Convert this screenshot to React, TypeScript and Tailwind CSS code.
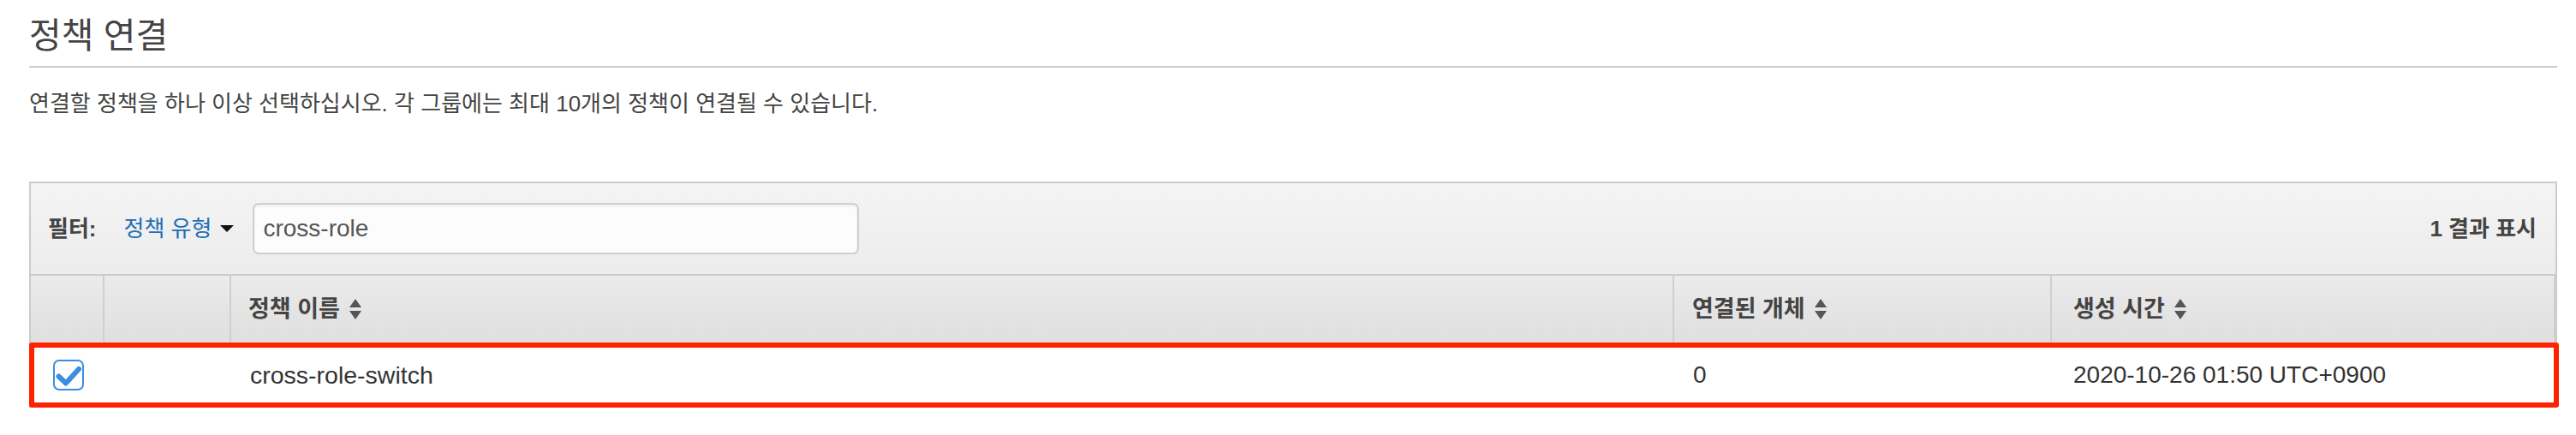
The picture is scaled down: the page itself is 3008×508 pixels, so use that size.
import React from "react";

const SANS = "font-['Liberation_Sans','Noto_Sans_CJK_KR',sans-serif]";

function SortIcon() {
  return (
    <svg width="16" height="26" viewBox="0 0 16 26" className="ml-[10px] shrink-0">
      <path d="M8 1 L15 11 L1 11 Z" fill="#555" />
      <path d="M1 15 L15 15 L8 25 Z" fill="#555" />
    </svg>
  );
}

function CheckBox() {
  return (
    <svg width="36" height="36" viewBox="0 0 36 36">
      <rect x="1" y="1" width="34" height="34" rx="6" fill="#fff" stroke="#3a8ee0" strokeWidth="2" />
      <polyline
        points="6.5,19.5 15,27.5 30,11"
        fill="none"
        stroke="#3a8ee0"
        strokeWidth="6"
        strokeLinecap="round"
        strokeLinejoin="round"
      />
    </svg>
  );
}

function HeaderCell({ label, className = "" }: { label?: string; className?: string }) {
  return (
    <div className={`flex items-center border-r-2 border-[#cfcfcf] ${className}`}>
      {label && (
        <>
          <span className="text-[27px] font-bold text-[#444]">{label}</span>
          <SortIcon />
        </>
      )}
    </div>
  );
}

export default function App() {
  return (
    <div className={`h-[508px] w-[3008px] overflow-hidden bg-white pl-[34px] pr-[22px] ${SANS}`}>
      <h2 className="pt-[18px] text-[41px] font-normal leading-[49px] text-[#444]">정책 연결</h2>
      <div className="mt-[10px] h-[2px] bg-[#cccccc]" />
      <p className="mt-[26px] text-[26px] leading-[32px] text-[#444]">
        연결할 정책을 하나 이상 선택하십시오. 각 그룹에는 최대 10개의 정책이 연결될 수 있습니다.
      </p>

      <div className="mt-[75px] border-x-2 border-t-2 border-[#cccccc]">
        {/* filter bar */}
        <div className="flex h-[108px] items-center border-b-2 border-[#cccccc] bg-gradient-to-b from-[#f4f4f4] to-[#ececec] pl-[20px] pr-[22px]">
          <span className="text-[26px] font-bold text-[#444]">필터:</span>
          <button type="button" className="ml-[32px] flex items-center text-[26px] text-[#1f6fb6]">
            정책 유형
            <span className="ml-[10px] h-0 w-0 border-x-[8px] border-t-[8px] border-x-transparent border-t-[#111]" />
          </button>
          <div className="ml-[22px] flex h-[60px] w-[708px] items-center rounded-[7px] border-2 border-[#cfcfcf] bg-[#fcfcfc] pl-[10px] shadow-[inset_0_2px_3px_rgba(0,0,0,0.06)]">
            <span className="text-[28px] text-[#555]">cross-role</span>
          </div>
          <span className="ml-auto text-[26px] font-bold text-[#444]">1 결과 표시</span>
        </div>

        {/* header */}
        <div className="grid h-[78px] grid-cols-[86px_148px_1685px_441px_1fr] bg-gradient-to-b from-[#ebebeb] to-[#dfdfdf]">
          <HeaderCell />
          <HeaderCell />
          <HeaderCell label="정책 이름" className="pl-[20px]" />
          <HeaderCell label="연결된 개체" className="pl-[21px]" />
          <HeaderCell label="생성 시간" className="border-r-0 pl-[25px]" />
        </div>

        {/* selected row */}
        <div className="-ml-[2px] -mr-[4px] grid h-[76px] grid-cols-[82px_148px_1685px_441px_1fr] items-center rounded-[3px] border-[6px] border-[#ff2200] bg-white text-[28px] text-[#333]">
          <div className="flex items-center pl-[22px]">
            <CheckBox />
          </div>
          <div />
          <div className="pl-[22px] text-[28.5px]">cross-role-switch</div>
          <div className="pl-[22px]">0</div>
          <div className="pl-[25px]">2020-10-26 01:50 UTC+0900</div>
        </div>
      </div>
    </div>
  );
}
